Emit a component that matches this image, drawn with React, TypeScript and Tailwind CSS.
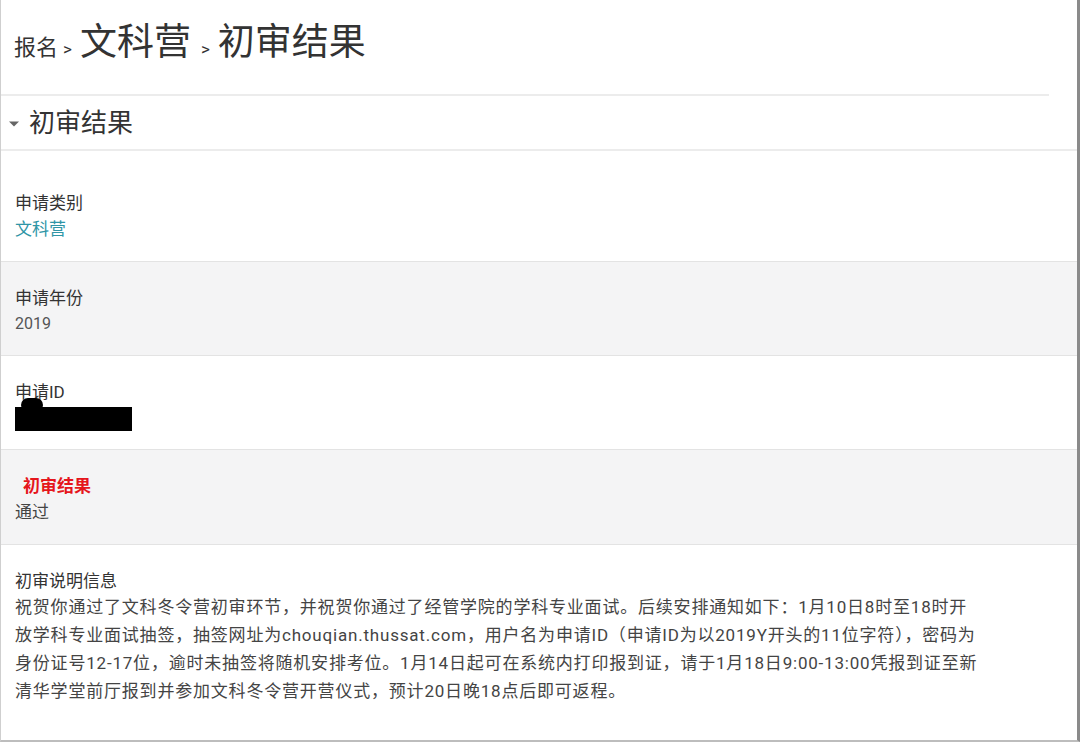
import React from 'react';

const font = { fontFamily: "Roboto, 'Noto Sans CJK SC', sans-serif" };

function Field({
  label,
  children,
  gray,
  first,
  labelClass,
}: {
  label: string;
  children: React.ReactNode;
  gray?: boolean;
  first?: boolean;
  labelClass?: string;
}) {
  return (
    <div
      className={`border-b border-[#e3e3e3] pl-[14px] pb-[17px] ${first ? 'pt-[40px]' : 'pt-[24px]'} ${
        gray ? 'bg-[#f4f4f5]' : 'bg-white'
      }`}
    >
      <div className={`text-[17px] leading-[24px] ${labelClass ?? 'text-[#333]'}`}>{label}</div>
      <div className="text-[16px] leading-[28px] text-[#444]">{children}</div>
    </div>
  );
}

export default function App() {
  return (
    <div
      style={font}
      className="w-[1080px] h-[742px] bg-white border-l border-[#cfcfcf] border-r-[3px] border-r-[#8a8a8a] border-b-2 border-b-[#bdbdbd] flex flex-col overflow-hidden"
    >
      {/* Breadcrumb title */}
      <div className="w-[1048px] h-[96px] border-b-2 border-[#ececec] pl-[13px] pt-[21px]">
        <div className="flex items-baseline text-[#333]">
          <span className="text-[22px]">报名</span>
          <span className="text-[17px] ml-[5px] mr-[8px]">&gt;</span>
          <span className="text-[37px] leading-[44px]">文科营</span>
          <span className="text-[17px] ml-[10px] mr-[8px]">&gt;</span>
          <span className="text-[37px] leading-[44px]">初审结果</span>
        </div>
      </div>

      {/* Section header */}
      <div className="h-[55px] border-b-2 border-[#ececec] flex items-center pl-[7px]">
        <svg width="12" height="8" viewBox="0 0 12 8" className="mr-[9px] mt-[2px]">
          <path d="M1 1.5 L11 1.5 L6 6.5 Z" fill="#666" />
        </svg>
        <span className="text-[26px] text-[#333] leading-none">初审结果</span>
      </div>

      <Field label="申请类别" first>
        <span className="text-[17px] text-[#2f95a6]">文科营</span>
      </Field>
      <Field label="申请年份" gray>
        <span className="text-[16px] text-[#555]">2019</span>
      </Field>
      <Field label="申请ID">
        <div className="relative h-[28px]">
          <div className="absolute left-0 top-[3px] w-[117px] h-[24px] bg-black" />
          <div className="absolute left-[6px] top-[-6px] w-[22px] h-[14px] rounded-full bg-black" />
        </div>
      </Field>
      <Field label="初审结果" gray labelClass="text-[#e5161c] font-bold pl-[8px]">
        <span className="text-[17px] text-[#444]">通过</span>
      </Field>

      <div className="flex-1 pl-[14px] pt-[24px] bg-white">
        <div className="text-[17px] leading-[24px] text-[#333]">初审说明信息</div>
        <p className="text-[17px] leading-[28px] text-[#444] tracking-[0.8px] whitespace-nowrap">
          祝贺你通过了文科冬令营初审环节，并祝贺你通过了经管学院的学科专业面试。后续安排通知如下：1月10日8时至18时开
          <br />
          放学科专业面试抽签，抽签网址为chouqian.thussat.com，用户名为申请ID（申请ID为以2019Y开头的11位字符），密码为
          <br />
          身份证号12-17位，逾时未抽签将随机安排考位。1月14日起可在系统内打印报到证，请于1月18日9:00-13:00凭报到证至新
          <br />
          清华学堂前厅报到并参加文科冬令营开营仪式，预计20日晚18点后即可返程。
        </p>
      </div>
    </div>
  );
}
